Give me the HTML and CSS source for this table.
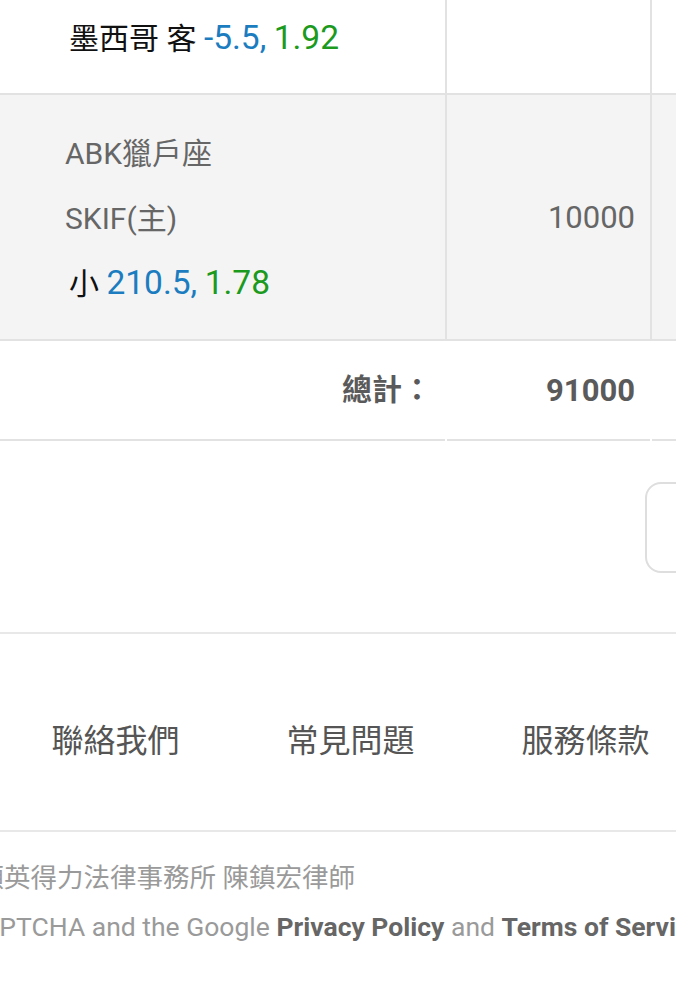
FILE: index.html
```html
<!DOCTYPE html>
<html lang="zh-Hant">
<head>
<meta charset="utf-8">
<title>投注單</title>
<link rel="stylesheet" href="styles.css">
</head>
<body>
<div class="page">
  <div class="table">
    <div class="row first">
      <div class="cell c1">
        <div class="ln bet"><span class="tx">墨西哥 客</span> <span class="hd">-5.5,</span> <span class="od">1.92</span></div>
      </div>
      <div class="cell c2"></div>
      <div class="cell c3"></div>
    </div>
    <div class="row alt">
      <div class="cell c1">
        <div class="ln">ABK獵戶座</div>
        <div class="ln">SKIF(主)</div>
        <div class="ln bet"><span class="tx">小</span> <span class="hd">210.5,</span> <span class="od">1.78</span></div>
      </div>
      <div class="cell c2 amt">10000</div>
      <div class="cell c3"></div>
    </div>
    <div class="row total">
      <div class="cell c1 lbl">總計：</div>
      <div class="cell c2 amt">91000</div>
      <div class="cell c3"></div>
    </div>
  </div>

  <div class="actions">
    <div class="btn"></div>
  </div>

  <nav class="links">
    <a href="#">聯絡我們</a>
    <a href="#">常見問題</a>
    <a href="#">服務條款</a>
  </nav>

  <footer class="legal">
    <p class="l1">顧英得力法律事務所 陳鎮宏律師</p>
    <p class="l2">reCAPTCHA and the Google <b>Privacy Policy</b> and <b>Terms of Service</b> apply.</p>
  </footer>
</div>
</body>
</html>
```
FILE: styles.css
```css
* {
  box-sizing: border-box;
  margin: 0;
  padding: 0;
}

html, body {
  background: #fff;
}

body {
  margin: 0;
  overflow: hidden;
  font-family: Roboto, "Noto Sans CJK TC", sans-serif;
}

.page {
  width: 676px;
  overflow: hidden;
}

/* table */
.row {
  display: grid;
  grid-template-columns: 447px 205px 1fr;
}

.cell {
  border-bottom: 2px solid #e2e2e2;
  border-right: 2px solid #e2e2e2;
}

.c3 {
  border-right: 0;
}

.alt {
  background: #f4f4f4;
}

.c1 {
  padding-left: 65px;
  font-size: 30px;
  line-height: 65px;
  color: #666;
}

.first .c1 {
  padding-top: 6px;
  padding-bottom: 22px;
}

.alt .c1 {
  padding-top: 26px;
  padding-bottom: 23px;
}

.ln {
  white-space: nowrap;
  height: 65px;
}

.bet {
  margin-left: 4px;
}

.tx {
  color: #111;
}

.hd,
.od {
  font-size: 33.5px;
  line-height: 1;
}

.hd {
  color: #1b7dc0;
}

.od {
  color: #1b9a1d;
}

.amt {
  display: flex;
  align-items: center;
  justify-content: flex-end;
  padding-right: 15px;
  font-size: 31px;
  color: #666;
}

.total {
  grid-template-columns: 445px 203px 1fr;
  column-gap: 2px;
}

.total .cell {
  border-right: 0;
  height: 100px;
}

.total .lbl {
  display: flex;
  align-items: center;
  justify-content: flex-end;
  padding-right: 13px;
  font-weight: 700;
  color: #5a5a5a;
  line-height: 1;
}

.total .amt {
  font-weight: 700;
  color: #5a5a5a;
}

/* actions */
.actions {
  display: flex;
  justify-content: flex-end;
  padding: 41px 0 59px;
  border-bottom: 2px solid #e8e8e8;
}

.btn {
  flex-shrink: 0;
  width: 200px;
  height: 91px;
  margin-right: -169px;
  border: 2px solid #dedede;
  border-radius: 16px;
  background: #fff;
}

/* links */
.links {
  display: flex;
  margin-left: -2px;
  padding: 83px 0 65px;
  border-bottom: 2px solid #e8e8e8;
}

.links a {
  flex-shrink: 0;
  width: 235px;
  text-align: center;
  font-size: 32px;
  line-height: 48px;
  color: #555;
  text-decoration: none;
}

/* legal */
.legal {
  padding-top: 21px;
  font-size: 26.5px;
  line-height: 49px;
  color: #9a9a9a;
  white-space: nowrap;
}

.legal b {
  color: #666;
  font-weight: 700;
}

.l1 {
  margin-left: -22.5px;
}

.l2 {
  margin-left: -58px;
}
```
